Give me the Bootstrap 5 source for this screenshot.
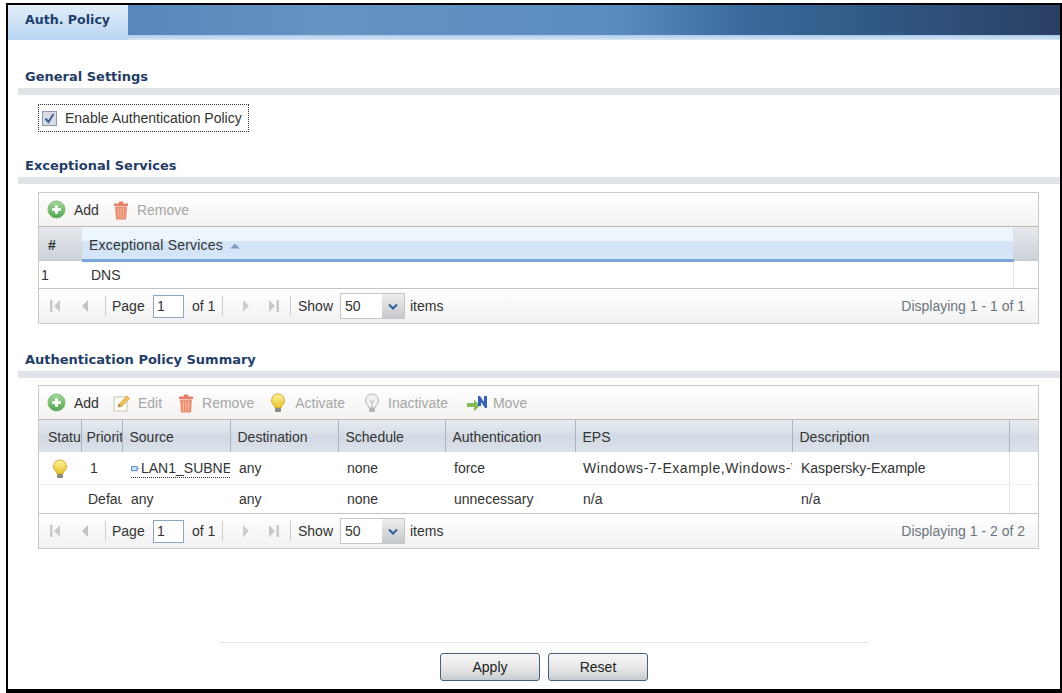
<!DOCTYPE html>
<html lang="en">
<head>
  <meta charset="UTF-8">
  <meta name="viewport" content="width=device-width, initial-scale=1.0">
  <title>Auth. Policy</title>
  <link href="https://cdn.jsdelivr.net/npm/bootstrap@5.3.1/dist/css/bootstrap.min.css" rel="stylesheet">
  <style>
    body { margin: 0; background: #fff; font-family: "Liberation Sans", Arial, sans-serif; font-size: 14px; color: #333; }
    .frame { height: 690px; margin: 3px 0 0 6px; border-style: solid; border-color: #000; border-width: 2px 2px 4px 2px; }
    .tabbar { height: 30px; background: linear-gradient(90deg, #4f80b6 0%, #6593c2 30%, #5a8dbf 58%, #3a6a9c 70%, #2f5580 85%, #2b3f63 100%); }
    .tabstrip { height: 5px; background: linear-gradient(#a9cbee, #dbe7f3); }
    .tab-label { width: 120px; height: 35px; padding: 7px 0 0 17px; background: linear-gradient(#e3effa, #b8d4f1); font-family: "DejaVu Sans", sans-serif; font-weight: 700; font-size: 12.6px; line-height: 16px; color: #1d3f6b; }
    .sect-title { margin: 29px 0 0 10px; padding: 0 0 3px 7px; border-bottom: 7px solid #e1e4e9; font-family: "DejaVu Sans", sans-serif; font-weight: 700; font-size: 13px; line-height: 16px; color: #1f3d66; }
    .check-wrap { width: 211px; height: 28px; margin: 9px 0 0 30px; padding-left: 3px; border: 1px dotted #333; }
    .sect-gap { margin-top: 26px; }
    .sect-last { margin-top: 28px; }
    .grid-panel { width: 1001px; margin: 8px 0 0 30px; border: 1px solid #c9c9c9; }
    .panel-two { margin-top: 7px; }
    .tool-row { height: 34px; padding-left: 8px; background: linear-gradient(#fff, #f4f2f1); border-bottom: 1px solid #b9b9b9; }
    .tool-btn { padding: 0; border: 0; border-radius: 0; font-size: 14px; line-height: 18px; color: #333; }
    .tool-btn:disabled { color: #a6a6a6; opacity: 1; }
    .tool-btn svg { flex: none; }
    .grid-tbl { width: 100%; table-layout: fixed; border-collapse: collapse; margin: 0; }
    .grid-tbl th, .grid-tbl td { padding: 0 0 0 7px; font-weight: 400; white-space: nowrap; overflow: hidden; }
    .grid-tbl th { height: 33px; }
    .hd-plain th { height: 32px; padding-top: 3px; background: linear-gradient(#e7ebf0, #d2dae4 55%, #dde2e9); border-right: 1px solid #aab5c4; }
    .hd-plain th:last-child { border-right: 0; }
    .hd-plain .th-status { padding-left: 9px; }
    .hd-plain .th-prio { padding-left: 5px; }
    .hd-sort th { padding-top: 5px; }
    .hd-sort .sort-col { background: linear-gradient(#edf5fd 45%, #d3e5f7 45%); border-bottom: 3px solid #7aa5da; letter-spacing: .2px; }
    .hd-sort .num-col, .hd-sort .end-col { background: linear-gradient(#e6e8ec, #cdd2d9); border-bottom: 1px solid #c8ccd2; }
    .hd-sort .num-col { font-weight: 700; padding-left: 9px; }
    .sort-mark { margin-left: 3px; }
    .grid-tbl td { height: 28px; padding: 2px 0 0 9px; background: #fff; }
    .rows-two td { height: 32px; border-bottom: 1px solid #f1f1f1; }
    .rows-two tr:last-child td { height: 29px; border-bottom: 0; }
    .grid-tbl td.end-col { border-left: 1px solid #e4e4e4; }
    .grid-tbl td.cell-id { padding-left: 2px; }
    .grid-tbl td.cell-dflt { padding-left: 7px; }
    .grid-tbl td.cell-eps { padding-left: 8px; }
    .eps-long { letter-spacing: .55px; }
    .row-bulb { margin-left: 4px; }
    .src-link { display: block; overflow: hidden; padding-bottom: 1px; border-bottom: 1px dotted #333; color: #333; line-height: 16px; }
    .src-link svg { margin-right: 2px; }
    .pager-row { height: 35px; padding: 0 13px 0 10px; background: linear-gradient(#fff, #f1f1f1); border-top: 1px solid #c4c4c4; font-size: 14px; }
    .pg-sep { width: 1px; height: 20px; background: #ccc; }
    .pg-input { width: 31px; height: 23px; padding: 0 0 0 3px; border: 1px solid #8fa6be; background: #fff; line-height: 21px; }
    .pg-select { width: 65px; height: 26px; border: 1px solid #c6c6c6; background: #fff; padding-left: 4px; line-height: 24px; position: relative; }
    .pg-arrow { width: 22px; height: 24px; background: linear-gradient(#eee, #c5c8cc); }
    .foot-area { width: 648px; margin: 0 0 0 212px; padding-top: 10px; border-top: 1px solid #e4e4e4; }
    .foot-gap { height: 93px; }
    .act-btn { width: 100px; height: 28px; padding: 0; border: 1px solid #44627c; border-radius: 3px; background: linear-gradient(#f7f7f7, #e6e6e6 55%, #c6cbd1); font-size: 14px; color: #222; line-height: 26px; }
    .w-page { width: 41px; } .w-of { width: 30px; } .w-show { width: 42px; }
    .ml5 { margin-left: 5px; } .ml6 { margin-left: 6px; } .ml7 { margin-left: 7px; } .ml8 { margin-left: 8px; } .ml9 { margin-left: 9px; } .ml10 { margin-left: 10px; }
    .ml14 { margin-left: 14px; } .ml16 { margin-left: 16px; } .ml17 { margin-left: 17px; } .ml18 { margin-left: 18px; } .ml19 { margin-left: 19px; }
  </style>
</head>
<body>
  <svg width="0" height="0" class="position-absolute">
    <defs>
      <linearGradient id="gAdd" x1="0" y1="0" x2="0" y2="1"><stop offset="0" stop-color="#a5d79b"/><stop offset="1" stop-color="#4fa651"/></linearGradient>
      <linearGradient id="gBulb" x1="0" y1="0" x2="0" y2="1"><stop offset="0" stop-color="#fff59c"/><stop offset="1" stop-color="#e7bf2e"/></linearGradient>
      <symbol id="i-add" viewBox="0 0 20 20"><circle cx="10" cy="10" r="9" fill="url(#gAdd)" stroke="#7ab878"/><path d="M10 5.500v9M5.500 10h9" stroke="#fff" stroke-width="3"/></symbol>
      <symbol id="i-trash" viewBox="0 0 16 20"><path d="M1 3.500h14v2.500H1zM5.500 3.500l.7-2h3.600l.7 2z" fill="#e4806a"/><path d="M2 6.500h12l-1 13H3z" fill="#ea8f72"/><path d="M5.500 8v10M8 8v10M10.500 8v10" stroke="#f3b9a5" stroke-width="1"/></symbol>
      <symbol id="i-edit" viewBox="0 0 18 18"><rect x="1" y="3" width="13" height="14" fill="#fffdf4" stroke="#c9c4b4"/><path d="M5 13l1-3 8-8 2.500 2.500-8 8z" fill="#f2c35a" stroke="#d59a32" stroke-width=".7"/><path d="M5 13l1-3 2 2z" fill="#777"/></symbol>
      <symbol id="i-bulb" viewBox="0 0 16 20"><path d="M8 1a6.500 6.500 0 0 0-4 11.600c.8.800 1 1.600 1 2.400h6c0-.8.200-1.600 1-2.400A6.500 6.500 0 0 0 8 1z" fill="url(#gBulb)" stroke="#d6a92c"/><rect x="5" y="15" width="6" height="4" rx="1" fill="#8a8a84"/></symbol>
      <symbol id="i-bulb-off" viewBox="0 0 16 20"><path d="M8 1a6.500 6.500 0 0 0-4 11.600c.8.800 1 1.600 1 2.400h6c0-.8.200-1.600 1-2.400A6.500 6.500 0 0 0 8 1z" fill="#f1f1f1" stroke="#b5b5b5"/><path d="M6 7l2 3 2-3M8 10v5" fill="none" stroke="#b5b5b5"/><rect x="5" y="15" width="6" height="4" rx="1" fill="#b3b3b3"/></symbol>
      <symbol id="i-move" viewBox="0 0 22 18"><path d="M1 9h7V5.500l6 6-6 6V13H1z" fill="#84bb5c"/><path d="M12 12V2h2l4 6V2h3v12h-2l-4-6v4z" fill="#3561b4"/></symbol>
      <symbol id="i-first" viewBox="0 0 12 16"><path d="M1 2h2.500v12H1z" fill="#c5c9cc"/><path d="M11 2v12L5 8z" fill="#c5c9cc"/></symbol>
      <symbol id="i-prev" viewBox="0 0 12 16"><path d="M9 2v12L3 8z" fill="#c0c4c7"/></symbol>
      <symbol id="i-next" viewBox="0 0 12 16"><path d="M3 2v12l6-6z" fill="#c9cdd0"/></symbol>
      <symbol id="i-last" viewBox="0 0 12 16"><path d="M1 2v12l6-6z" fill="#c5c9cc"/><path d="M8.500 2H11v12H8.500z" fill="#c5c9cc"/></symbol>
      <symbol id="i-net" viewBox="0 0 9 7"><path d="M.500.500h6.500v5H.500zM7 3h2" fill="#cfe0f5" stroke="#3f76c0"/></symbol>
    </defs>
  </svg>

  <div class="frame">
    <div class="tabbar"><div class="tab-label position-relative">Auth. Policy</div></div>
    <div class="tabstrip"></div>

    <div class="sect-title">General Settings</div>
    <div class="check-wrap d-flex align-items-center">
      <svg width="15" height="15" viewBox="0 0 15 15"><rect x=".5" y=".5" width="14" height="14" fill="#d9dce6" stroke="#8d97ad"/><path d="M3.500 7.500l3 3.500 5-8" fill="none" stroke="#44618f" stroke-width="2"/></svg>
      <span class="ml8">Enable Authentication Policy</span>
    </div>

    <div class="sect-title sect-gap">Exceptional Services</div>
    <div class="grid-panel">
      <div class="tool-row d-flex align-items-center">
        <button class="btn tool-btn d-flex align-items-center" type="button"><svg width="19" height="19"><use href="#i-add"/></svg><span class="ml8">Add</span></button>
        <button class="btn tool-btn d-flex align-items-center ml14" type="button" disabled><svg width="16" height="20"><use href="#i-trash"/></svg><span class="ml8">Remove</span></button>
      </div>
      <table class="grid-tbl">
        <colgroup><col style="width:43px"><col><col style="width:25px"></colgroup>
        <thead class="hd-sort"><tr>
          <th class="num-col">#</th>
          <th class="sort-col">Exceptional Services <svg width="10" height="6" viewBox="0 0 11 7" class="sort-mark"><path d="M0 6.500L5.500.500 11 6.500z" fill="#7c9cc4"/></svg></th>
          <th class="end-col"></th>
        </tr></thead>
        <tbody><tr><td class="cell-id">1</td><td>DNS</td><td class="end-col"></td></tr></tbody>
      </table>
      <div class="pager-row d-flex align-items-center">
        <svg width="12" height="16"><use href="#i-first"/></svg>
        <svg width="12" height="16" class="ml18"><use href="#i-prev"/></svg>
        <span class="pg-sep ml14"></span>
        <span class="ml6 w-page">Page</span>
        <span class="pg-input">1</span>
        <span class="ml8 w-of">of 1</span>
        <span class="pg-sep"></span>
        <svg width="12" height="16" class="ml17"><use href="#i-next"/></svg>
        <svg width="12" height="16" class="ml16"><use href="#i-last"/></svg>
        <span class="pg-sep ml10"></span>
        <span class="ml7 w-show">Show</span>
        <span class="pg-select d-flex justify-content-between"><span>50</span><span class="pg-arrow d-flex align-items-center justify-content-center"><svg width="10" height="7" viewBox="0 0 10 7"><path d="M1 1.500l4 4 4-4" fill="none" stroke="#2f5f9e" stroke-width="2"/></svg></span></span>
        <span class="ml5">items</span>
        <span class="ms-auto text-secondary">Displaying 1 - 1 of 1</span>
      </div>
    </div>

    <div class="sect-title sect-last">Authentication Policy Summary</div>
    <div class="grid-panel panel-two">
      <div class="tool-row d-flex align-items-center">
        <button class="btn tool-btn d-flex align-items-center" type="button"><svg width="19" height="19"><use href="#i-add"/></svg><span class="ml8">Add</span></button>
        <button class="btn tool-btn d-flex align-items-center ml14" type="button" disabled><svg width="18" height="18"><use href="#i-edit"/></svg><span class="ml7">Edit</span></button>
        <button class="btn tool-btn d-flex align-items-center ml16" type="button" disabled><svg width="16" height="20"><use href="#i-trash"/></svg><span class="ml8">Remove</span></button>
        <button class="btn tool-btn d-flex align-items-center ml16" type="button" disabled><svg width="16" height="20"><use href="#i-bulb"/></svg><span class="ml9">Activate</span></button>
        <button class="btn tool-btn d-flex align-items-center ml19" type="button" disabled><svg width="16" height="20"><use href="#i-bulb-off"/></svg><span class="ml8">Inactivate</span></button>
        <button class="btn tool-btn d-flex align-items-center ml18" type="button" disabled><svg width="22" height="18"><use href="#i-move"/></svg><span class="ml5">Move</span></button>
      </div>
      <table class="grid-tbl">
        <colgroup><col style="width:42px"><col style="width:41px"><col style="width:108px"><col style="width:108px"><col style="width:107px"><col style="width:130px"><col style="width:217px"><col style="width:217px"><col></colgroup>
        <thead class="hd-plain"><tr>
          <th class="th-status">Status</th><th class="th-prio">Priority</th><th>Source</th><th>Destination</th><th>Schedule</th><th>Authentication</th><th>EPS</th><th>Description</th><th></th>
        </tr></thead>
        <tbody class="rows-two">
          <tr>
            <td><svg width="16" height="20" class="d-block row-bulb"><use href="#i-bulb"/></svg></td>
            <td>1</td>
            <td><a class="src-link text-decoration-none" href="#"><svg width="8" height="6"><use href="#i-net"/></svg>LAN1_SUBNET</a></td>
            <td>any</td><td>none</td><td>force</td><td class="cell-eps eps-long">Windows-7-Example,Windows-Vista</td><td>Kaspersky-Example</td><td class="end-col"></td>
          </tr>
          <tr>
            <td></td><td class="cell-dflt">Default</td><td>any</td><td>any</td><td>none</td><td>unnecessary</td><td class="cell-eps">n/a</td><td>n/a</td><td class="end-col"></td>
          </tr>
        </tbody>
      </table>
      <div class="pager-row d-flex align-items-center">
        <svg width="12" height="16"><use href="#i-first"/></svg>
        <svg width="12" height="16" class="ml18"><use href="#i-prev"/></svg>
        <span class="pg-sep ml14"></span>
        <span class="ml6 w-page">Page</span>
        <span class="pg-input">1</span>
        <span class="ml8 w-of">of 1</span>
        <span class="pg-sep"></span>
        <svg width="12" height="16" class="ml17"><use href="#i-next"/></svg>
        <svg width="12" height="16" class="ml16"><use href="#i-last"/></svg>
        <span class="pg-sep ml10"></span>
        <span class="ml7 w-show">Show</span>
        <span class="pg-select d-flex justify-content-between"><span>50</span><span class="pg-arrow d-flex align-items-center justify-content-center"><svg width="10" height="7" viewBox="0 0 10 7"><path d="M1 1.500l4 4 4-4" fill="none" stroke="#2f5f9e" stroke-width="2"/></svg></span></span>
        <span class="ml5">items</span>
        <span class="ms-auto text-secondary">Displaying 1 - 2 of 2</span>
      </div>
    </div>

    <div class="foot-gap"></div>
    <div class="foot-area d-flex justify-content-center gap-2">
      <button class="btn act-btn" type="button">Apply</button>
      <button class="btn act-btn" type="button">Reset</button>
    </div>
  </div>

  <script src="https://cdn.jsdelivr.net/npm/bootstrap@5.3.1/dist/js/bootstrap.bundle.min.js"></script>
</body>
</html>
